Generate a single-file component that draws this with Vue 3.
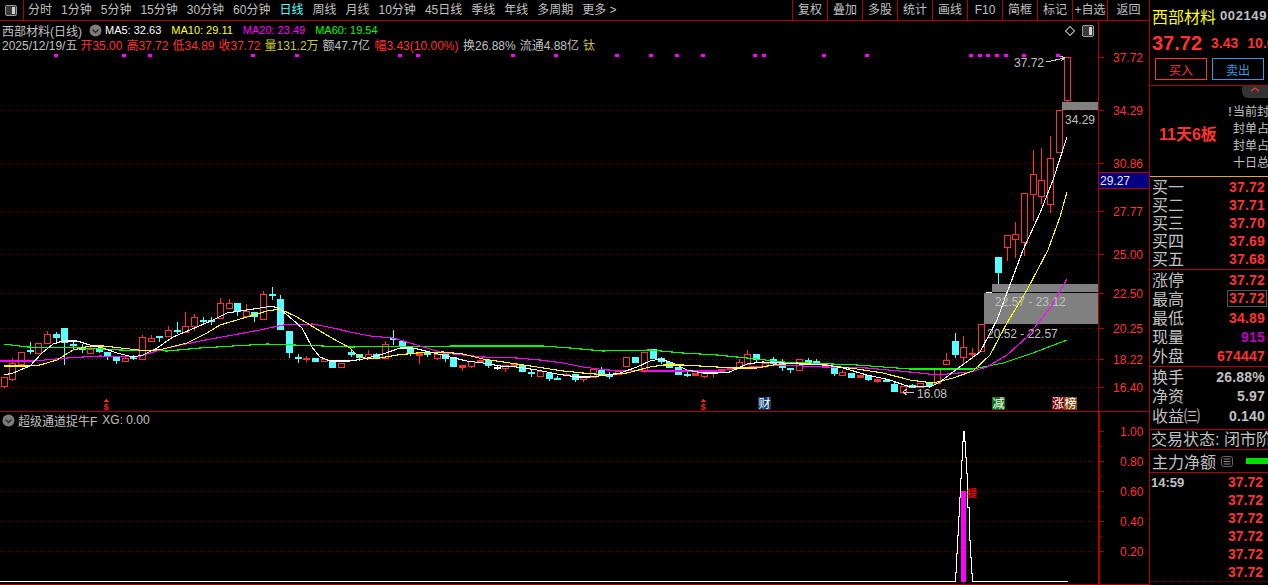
<script setup>
const leftTools = ['分时','1分钟','5分钟','15分钟','30分钟','60分钟','日线','周线','月线','10分钟','45日线','季线','年线','多周期','更多 >']
const rightTools = ['复权','叠加','多股','统计','画线','F10','简框','标记','+自选','返回']

function conv(ox, oy, list) {
  return list.map(([x, t, b, wt, wb, k]) => ({
    x: Math.round(ox + x / 3),
    t: Math.round(oy + t / 3),
    b: Math.round(oy + b / 3),
    wt: Math.round(oy + (wt ?? t) / 3),
    wb: Math.round(oy + (wb ?? b) / 3),
    k
  }))
}
const raw = [
  ...conv(0, 270, [
    [13,322,347,322,352,'r'],[37,280,326,265,330,'r'],[64,247,281,247,285,'r'],[91,240,240,216,248,'c'],
    [115,219,248,219,248,'r'],[142,192,218,183,218,'r'],[169,192,200,185,215,'c'],[193,174,216,174,282,'c'],
    [219,222,222,212,235,'c'],[247,233,233,222,245,'c'],[271,238,248,228,248,'r'],[298,237,242,232,245,'c'],
    [322,245,258,245,268,'c'],[349,261,270,261,278,'c'],[376,264,272,258,272,'r'],[400,260,260,254,266,'c'],
    [427,202,268,195,268,'r'],[454,203,213,195,213,'r'],[478,197,197,197,213,'c'],[505,181,197,168,197,'r'],
    [532,180,180,155,190,'c'],[556,169,187,127,187,'r'],[583,142,167,132,180,'r'],[610,150,150,142,160,'c'],
    [634,150,150,142,162,'c'],[661,100,143,85,143,'r'],[688,100,113,88,113,'r'],[712,99,124,99,135,'c'],
    [739,122,137,102,137,'r'],[763,126,138,126,152,'c'],[790,73,147,63,147,'r'],[817,71,71,52,87,'c'],
    [841,87,176,75,176,'c'],[868,183,245,183,260,'c'],[895,260,260,253,275,'c'],[919,264,264,258,272,'r'],
    [946,264,272,264,272,'c'],[973,268,274,268,274,'r'],[997,270,290,270,290,'c'],[1024,280,292,280,292,'r']
  ]),
  ...conv(350, 320, [
    [3,97,103,90,108,'c'],[27,103,110,103,120,'c'],[53,103,115,90,115,'r'],[78,103,110,100,113,'c'],
    [104,72,115,63,115,'r'],[130,55,55,30,72,'c'],[155,64,75,64,75,'c'],[181,85,100,78,104,'c'],
    [208,100,106,100,130,'f'],[232,100,100,95,108,'c'],[260,103,113,103,118,'r'],[286,103,113,103,122,'c'],
    [310,110,137,110,137,'c'],[337,136,140,136,150,'f'],[364,124,137,124,141,'r'],[389,120,126,120,126,'f'],
    [415,120,136,120,141,'c'],[441,141,141,135,147,'w'],[466,136,143,136,152,'r'],[493,130,135,130,141,'f'],
    [517,135,152,135,152,'c'],[544,155,155,150,167,'c'],[571,154,167,154,167,'r'],[596,160,173,160,179,'c'],
    [622,175,175,169,177,'c'],[649,162,166,158,166,'f'],[674,163,176,163,183,'c'],[700,172,178,172,182,'r'],
    [728,146,170,146,170,'r'],[752,150,162,140,162,'c'],[778,164,164,156,173,'c'],[805,154,162,154,162,'r'],
    [829,112,137,112,137,'r'],[856,111,126,111,126,'c'],[883,97,152,97,155,'r']
  ]),
  ...conv(650, 330, [
    [8,58,84,58,84,'c'],[34,85,92,80,100,'c'],[58,97,110,97,110,'c'],[85,112,132,112,132,'c'],
    [110,131,131,125,137,'c'],[136,129,134,129,134,'f'],[163,130,137,130,141,'r'],[190,125,130,125,140,'f'],
    [214,118,125,118,125,'f'],[241,112,118,112,118,'f'],[268,96,115,88,115,'r'],[292,72,102,60,102,'r'],
    [319,72,88,72,92,'c'],[346,100,107,100,112,'r'],[370,88,100,82,100,'c'],[397,98,110,88,120,'c'],
    [421,114,114,114,125,'c'],[448,88,119,88,119,'r'],[475,90,96,85,96,'c'],[499,94,102,88,102,'c'],
    [526,103,107,103,107,'f'],[553,113,128,113,135,'c'],[577,126,134,120,134,'r'],[604,128,140,128,140,'c'],
    [631,135,140,135,140,'f'],[655,136,147,136,150,'c'],[682,147,152,147,156,'f'],[709,149,149,146,152,'c'],
    [733,162,183,155,183,'c'],[760,168,185,168,190,'r'],[787,165,170,162,172,'c'],[811,158,172,158,172,'r'],
    [838,158,165,158,165,'c'],[862,115,160,115,160,'r']
  ]),
  ...conv(920, 240, [
    [78,361,371,338,371,'r'],[106,303,342,278,352,'c'],[130,322,350,288,368,'r'],[157,340,340,325,355,'r'],
    [184,253,332,253,332,'r'],[235,52,95,52,128,'c']
  ]),
  ...conv(920, 40, [
    [262,586,620,586,660,'r'],[286,583,598,546,650,'r'],[313,460,607,460,645,'r'],[340,403,461,330,540,'r'],
    [364,421,467,325,490,'r'],[391,355,491,288,515,'r'],[418,211,335,211,335,'r'],[442,52,179,52,183,'r']
  ])
]
const candles = raw.map((c) => {
  const color = c.k === 'c' ? '#55ffff' : c.k === 'w' ? '#ffffff' : '#ff3232'
  return { ...c, color, hollow: c.k === 'r' && c.b > c.t, cross: c.b === c.t }
})

const toPts = (arr) => arr.map((p) => p.join(',')).join(' ')
const white = toPts([[4,375],[13,373],[30,366],[42,353],[53,344],[63,341],[77,341],[90,345],[103,348],[117,353],[133,357],[143,355],[157,348],[173,337],[197,327],[213,320],[227,313],[240,311],[260,308],[272,306],[280,309],[293,320],[302,328],[312,347],[320,357],[330,361],[350,361],[363,359],[383,354],[400,348],[413,348],[430,352],[450,357],[467,361],[483,363],[500,366],[517,367],[537,370],[557,374],[577,377],[590,377],[607,375],[620,373],[637,367],[650,361],[660,359],[673,363],[687,370],[703,373],[717,373],[730,372],[747,364],[763,362],[783,363],[800,364],[827,365],[843,368],[867,375],[890,380],[907,386],[930,387],[940,382],[953,372],[980,352],[997,320],[1008,290],[1023,250],[1040,213],[1053,180],[1067,137]])
const yellow = toPts([[4,366],[27,366],[40,365],[57,360],[73,350],[90,346],[103,346],[130,349],[147,351],[163,349],[187,343],[207,333],[220,325],[247,317],[267,311],[280,309],[297,317],[310,325],[330,337],[350,348],[357,355],[367,359],[380,358],[397,355],[417,353],[443,352],[463,354],[483,359],[510,363],[537,367],[563,371],[583,373],[607,375],[627,373],[650,367],[663,365],[683,365],[717,367],[733,368],[757,368],[773,365],[797,363],[823,365],[857,369],[883,373],[910,380],[933,383],[953,378],[973,371],[990,355],[1007,323],[1027,290],[1048,250],[1060,217],[1067,192]])
const magenta = toPts([[0,361],[33,361],[67,358],[100,356],[137,357],[167,348],[200,341],[233,335],[260,330],[283,325],[313,324],[333,328],[350,332],[370,336],[393,338],[417,345],[443,353],[483,357],[517,358],[540,360],[563,363],[583,367],[607,370],[650,371],[717,371],[750,367],[783,365],[823,367],[867,368],[910,372],[937,375],[970,372],[987,367],[1007,355],[1027,337],[1050,308],[1067,279]])
const green = toPts([[4,344],[27,347],[83,348],[120,350],[167,351],[200,348],[267,344],[350,347],[457,346],[500,346],[543,346],[570,348],[603,351],[650,350],[683,353],[717,355],[747,358],[783,362],[857,365],[910,369],[973,369],[1003,363],[1033,353],[1067,340]])

const dots = [56,124,150,253,297,400,418,513,556,617,651,677,703,755,764,824,867,971,980,988,997,1006,1024,1058]
const upperGrid = [110,163,211,254,293,328,359,387]
const upperAxis = [[57,'37.72'],[110,'34.29'],[163,'30.86'],[211,'27.77'],[254,'25.00'],[293,'22.50'],[328,'20.25'],[359,'18.22'],[387,'16.40']]
const lowerAxis = [[431,'1.00'],[461,'0.80'],[491,'0.60'],[521,'0.40'],[551,'0.20']]
const lowerMinor = [446,476,506,536]
const lowerGrid = [461,491,521,551]
const peak = [[0,514],[106,514],[106,487],[109,487],[109,430],[112,430],[112,375],[115,375],[115,318],[118,318],[118,260],[121,260],[121,205],[124,205],[124,150],[127,150],[127,93],[130,93],[130,63],[132,63],[132,93],[135,93],[135,140],[138,140],[138,190],[140,190],[140,240],[142,240],[142,290],[146,290],[146,338],[148,338],[148,390],[151,390],[151,440],[154,440],[154,490],[157,490],[157,514],[440,514]]
const peakPts = '0,581.5 ' + toPts(peak.map(([x, y]) => [Math.round(920 + x / 3) + 0.5, Math.round(410 + y / 3) + 0.5]))

const buys = [['买一','37.72'],['买二','37.71'],['买三','37.70'],['买四','37.69'],['买五','37.68']]
const stats = [
  { l: '涨停', v: '37.72', c: 'red' },
  { l: '最高', v: '37.72', c: 'red', box: true },
  { l: '最低', v: '34.89', c: 'red' },
  { l: '现量', v: '915', c: 'purple' },
  { l: '外盘', v: '674447', c: 'red' }
]
const stats2 = [['换手','26.88%'],['净资','5.97'],['收益㈢','0.140']]
const ticks = ['14:59','','','','','']
</script>

<template>
  <div class="screen">
    <div class="left">
      <header class="toolbar">
        <div class="tool-icon">
          <svg width="12" height="11" viewBox="0 0 12 11">
            <rect x="0.5" y="0.5" width="11" height="10" rx="1.5" fill="#3a3a3a" stroke="#9a9a9a" />
            <rect x="7" y="2" width="3" height="7" fill="#d0d0d0" />
          </svg>
        </div>
        <nav class="periods">
          <span v-for="t in leftTools" :key="t" :class="{ active: t === '日线' }">{{ t }}</span>
        </nav>
        <nav class="actions">
          <span v-for="t in rightTools" :key="t" :class="{ last: t === '返回' }">{{ t }}</span>
        </nav>
      </header>

      <section class="upper">
        <div class="legend">
          <div class="legend-row">
            <span class="name">西部材料(日线)</span>
            <svg class="chev" width="13" height="13" viewBox="0 0 13 13">
              <circle cx="6.5" cy="6.5" r="6" fill="#7c7c7c" />
              <path d="M3.5 5.5 6.5 8.5 9.5 5.5" fill="none" stroke="#2a2a2a" stroke-width="1.4" />
            </svg>
            <span class="ma white">MA5: 32.63</span>
            <span class="ma yellow">MA10: 29.11</span>
            <span class="ma magenta">MA20: 23.49</span>
            <span class="ma green">MA60: 19.54</span>
          </div>
          <div class="legend-row quote">
            <span class="gray">2025/12/19/五</span>
            <span class="red first">开35.00</span>
            <span class="red">高37.72</span>
            <span class="red">低34.89</span>
            <span class="red">收37.72</span>
            <span class="olive">量131.2万</span>
            <span class="gray">额47.7亿</span>
            <span class="red nudge">幅3.43(10.00%)</span>
            <span class="gray nudge">换26.88%</span>
            <span class="gray">流通4.88亿</span>
            <span class="olive">钛</span>
          </div>
        </div>

        <svg class="chart" width="1149" height="390" viewBox="0 21 1149 390" shape-rendering="crispEdges">
          <line v-for="y in upperGrid" :key="'g' + y" x1="0" :y1="y + 0.5" x2="1098" :y2="y + 0.5" stroke="#8a0000" stroke-dasharray="1 3" />
          <rect x="1062" y="102" width="36" height="8" fill="#808080" />
          <rect x="992" y="284" width="106" height="8" fill="#808080" />
          <rect x="984" y="293" width="114" height="31" fill="#808080" />
          <line x1="986" y1="292.5" x2="992" y2="292.5" stroke="#fff" />

          <g v-for="(c, i) in candles" :key="'c' + i">
            <line :x1="c.x + 0.5" :y1="c.wt" :x2="c.x + 0.5" :y2="c.wb + 1" :stroke="c.color" />
            <line v-if="c.cross" :x1="c.x - 3" :y1="c.t + 0.5" :x2="c.x + 4" :y2="c.t + 0.5" :stroke="c.color" stroke-width="2" />
            <rect v-else-if="c.hollow" :x="c.x - 2.5" :y="c.t + 0.5" width="6" :height="c.b - c.t" fill="#000" :stroke="c.color" />
            <rect v-else :x="c.x - 3" :y="c.t" width="7" :height="c.b - c.t + 1" :fill="c.color" />
          </g>

          <polyline :points="green" class="ma-line" stroke="#00ff00" />
          <polyline :points="magenta" class="ma-line" stroke="#ff00ff" />
          <polyline :points="yellow" class="ma-line" stroke="#ffff00" />
          <polyline :points="white" class="ma-line" stroke="#ffffff" />

          <rect v-for="x in dots" :key="'d' + x" :x="x - 2" y="54" width="4" height="3" fill="#ff00ff" />

          <path d="M1070 26.5 1074.5 31 1070 35.5 1065.5 31Z" fill="none" stroke="#8c8c8c" />
          <rect x="1082.5" y="25.5" width="11" height="11" rx="2" fill="#3a3a3a" stroke="#9a9a9a" />
          <rect x="1089" y="27" width="3" height="8" fill="#d0d0d0" />

          <text x="1014" y="67" class="label">37.72</text>
          <path d="M1046 62 1065 58M1060 56 1065 58 1061 61" fill="none" stroke="#c8c8c8" />
          <text x="1065" y="124" class="label">34.29</text>
          <text x="917" y="398" class="label">16.08</text>
          <path d="M914 392H903M907 389 903 392 907 395" fill="none" stroke="#c8c8c8" />
          <text x="995" y="306" class="label">22.57 - 23.12</text>
          <text x="987" y="338" class="label">20.52 - 22.57</text>

          <polygon points="106,399 103,402 109,402" fill="#ff2020" />
          <text x="106" y="409.5" class="sign">$</text>
          <polygon points="703,399 700,402 706,402" fill="#ff2020" />
          <text x="703" y="409.5" class="sign">$</text>

          <rect x="758" y="397" width="13" height="13" fill="#0c3c6c" />
          <text x="764.5" y="408" class="chip">财</text>
          <rect x="992" y="397" width="13" height="13" fill="#107010" />
          <text x="998.5" y="408" class="chip">减</text>
          <rect x="1052" y="397" width="12" height="13" fill="#800000" />
          <text x="1058" y="408" class="chip">涨</text>
          <rect x="1064" y="397" width="13" height="13" fill="#804c10" />
          <text x="1070.5" y="408" class="chip">榜</text>

          <line x1="1098.5" y1="21" x2="1098.5" y2="411" stroke="#b00000" />
          <g v-for="[y, t] in upperAxis" :key="'a' + y">
            <line x1="1099" :y1="y + 0.5" x2="1104" :y2="y + 0.5" stroke="#b00000" />
            <text x="1113" :y="y + 5" class="axis">{{ t }}</text>
          </g>
          <rect x="1099" y="172" width="50" height="16" fill="#000080" />
          <line x1="1099" y1="172.5" x2="1149" y2="172.5" stroke="#b00000" />
          <line x1="1099" y1="188.5" x2="1149" y2="188.5" stroke="#b00000" />
          <text x="1100" y="185" class="axis-current">29.27</text>
        </svg>
      </section>

      <section class="lower">
        <div class="legend lower-legend">
          <svg class="chev-low" width="13" height="13" viewBox="0 0 13 13">
            <circle cx="6.5" cy="6.5" r="6" fill="#7c7c7c" />
            <path d="M3.5 5.5 6.5 8.5 9.5 5.5" fill="none" stroke="#2a2a2a" stroke-width="1.4" />
          </svg>
          <span class="gray">超级通道捉牛F</span>
          <span class="gray xg">XG: 0.00</span>
        </div>
        <svg class="chart" width="1149" height="172" viewBox="0 412 1149 172" shape-rendering="crispEdges">
          <line v-for="y in lowerGrid" :key="'lg' + y" x1="0" :y1="y + 0.5" x2="1095" :y2="y + 0.5" stroke="#8a0000" stroke-dasharray="1 3" />
          <rect x="961" y="491" width="5" height="91" fill="#ff00ff" />
          <polyline :points="peakPts" fill="none" stroke="#fff" />
          <text x="967" y="497" class="mark">提</text>
          <rect x="1098" y="412" width="2" height="172" fill="#b00000" />
          <g v-for="[y, t] in lowerAxis" :key="'la' + y">
            <line x1="1100" :y1="y + 0.5" x2="1104" :y2="y + 0.5" stroke="#b00000" />
            <text x="1120" :y="y + 5" class="axis">{{ t }}</text>
          </g>
          <line v-for="y in lowerMinor" :key="'lm' + y" x1="1100" :y1="y + 0.5" x2="1102" :y2="y + 0.5" stroke="#b00000" />
        </svg>
      </section>
    </div>

    <aside class="side">
      <div class="head">
        <div class="title"><span class="stock">西部材料</span><span class="code">002149</span></div>
        <div class="price"><b>37.72</b><span class="chg">3.43</span><span class="pct">10.00%</span></div>
        <div class="trade">
          <button class="buy">买入</button>
          <button class="sell">卖出</button>
        </div>
      </div>

      <div class="info">
        <div class="collapse">
          <svg width="10" height="7" viewBox="0 0 10 7"><path d="M1 5 5 2 9 5" fill="none" stroke="#ff3232" stroke-width="1.4" /></svg>
        </div>
        <div class="board">11天6板</div>
        <ul class="notes">
          <li><i>!</i>当前封</li>
          <li>封单占</li>
          <li>封单占</li>
          <li>十日总</li>
        </ul>
      </div>

      <div class="block buys">
        <div v-for="[l, v] in buys" :key="l" class="row r18"><span>{{ l }}</span><b class="red">{{ v }}</b></div>
      </div>

      <div class="block stats">
        <div v-for="s in stats" :key="s.l" class="row r19">
          <span>{{ s.l }}</span><b :class="[s.c, { boxed: s.box }]">{{ s.v }}</b>
        </div>
      </div>

      <div class="block stats2">
        <div v-for="[l, v] in stats2" :key="l" class="row r19"><span>{{ l }}</span><b class="dim">{{ v }}</b></div>
      </div>

      <div class="block status">交易状态: 闭市阶段</div>

      <div class="block flow">
        <span>主力净额</span>
        <svg width="12" height="11" viewBox="0 0 12 11">
          <rect x="0.5" y="0.5" width="11" height="10" rx="2" fill="none" stroke="#666" />
          <path d="M2.5 3H9.5M2.5 5.5H9.5M2.5 8H9.5" stroke="#888" />
        </svg>
        <i class="flow-bar"></i>
      </div>

      <div class="ticks">
        <div v-for="(t, i) in ticks" :key="i" class="tick"><b class="time">{{ t }}</b><b class="red">37.72</b></div>
      </div>
    </aside>
  </div>
</template>

<style>
html, body { margin: 0; background: #000; }
</style>

<style scoped>
.screen {
  display: flex;
  width: 1268px;
  height: 585px;
  overflow: hidden;
  background: #000;
  color: #c0c0c0;
  font-family: "Liberation Sans", "Noto Sans CJK SC", sans-serif;
  font-size: 12px;
}
.left {
  box-sizing: border-box;
  width: 1150px;
  flex: none;
  display: flex;
  flex-direction: column;
  border-right: 1px solid #b00000;
}
.toolbar {
  box-sizing: border-box;
  display: flex;
  height: 21px;
  flex: none;
  border-bottom: 1px solid #b00000;
  line-height: 20px;
  white-space: nowrap;
}
.tool-icon {
  box-sizing: border-box;
  width: 24px;
  display: flex;
  align-items: center;
  padding-left: 5px;
  border-right: 1px solid #b00000;
}
.periods {
  display: flex;
  gap: 9px;
  padding-left: 4px;
}
.periods .active { color: #55ffff; }
.actions { display: flex; margin-left: auto; }
.actions span {
  box-sizing: border-box;
  width: 35px;
  text-align: center;
  border-left: 1px solid #b00000;
}
.actions .last { width: 42px; }

.upper, .lower { position: relative; flex: none; }
.upper { height: 391px; border-bottom: 1px solid #b00000; box-sizing: border-box; }
.lower { height: 173px; border-bottom: 1px solid #b00000; box-sizing: border-box; }
.chart { display: block; }
.legend {
  position: absolute;
  left: 2px;
  top: 2px;
  z-index: 1;
}
.legend-row {
  display: flex;
  align-items: center;
  height: 14px;
  white-space: nowrap;
}
.chev { margin: 0 3px 0 7px; }
.ma { font-size: 11px; margin-right: 10px; }
.white { color: #fff; }
.yellow { color: #ff0; }
.magenta { color: #f0f; }
.green { color: #0f0; }
.gray { color: #c0c0c0; }
.red { color: #ff3232; }
.olive { color: #c8c832; }
.purple { color: #c000c0; }
.quote { gap: 4px; }
.quote .first { margin-left: -1px; }
.quote .nudge { margin-left: 0.5px; }

.lower-legend {
  display: flex;
  align-items: center;
  left: 2px;
  top: 1px;
  height: 14px;
  white-space: nowrap;
}
.chev-low { margin-right: 3px; }
.xg { margin-left: 5px; }

.ma-line { fill: none; stroke-width: 1.1; }
.label { fill: #c0c0c0; font-size: 12px; }
.axis { fill: #ff3232; font-size: 12px; }
.axis-current { fill: #e8e8e8; font-size: 12px; }
.sign { fill: #ff2020; font-size: 9px; font-weight: 700; text-anchor: middle; }
.chip { fill: #fff; font-size: 12px; text-anchor: middle; }
.mark { fill: #ff0000; font-size: 10px; font-weight: 700; }

.side {
  flex: 1;
  min-width: 0;
  display: flex;
  flex-direction: column;
  overflow: hidden;
}
.head {
  box-sizing: border-box;
  height: 86px;
  flex: none;
  border-bottom: 1px solid #b00000;
  white-space: nowrap;
}
.title {
  display: flex;
  align-items: center;
  height: 31px;
  padding-left: 2px;
}
.stock { color: #ff0; font-size: 16px; }
.code { margin-left: 4px; font-size: 13px; font-weight: 700; letter-spacing: 0.6px; color: #c0c0c0; }
.price {
  display: flex;
  align-items: center;
  height: 24px;
  padding-left: 2px;
  color: #ff3232;
  font-weight: 700;
}
.price b { font-size: 20px; }
.chg { margin-left: 9px; font-size: 14px; }
.pct { margin-left: 9px; font-size: 14px; }
.trade {
  display: flex;
  gap: 5px;
  margin-top: 3px;
  padding-left: 5px;
}
.trade button {
  box-sizing: border-box;
  width: 52px;
  height: 22px;
  padding: 0;
  background: #000;
  font: inherit;
  font-size: 12px;
  border: 1px solid;
}
.buy { color: #ff3232; border-color: #ff3232; }
.sell { color: #3c96dc; border-color: #3c96dc; }

.info {
  position: relative;
  box-sizing: border-box;
  height: 91px;
  flex: none;
  display: flex;
  border-bottom: 1px solid #e8a040;
  white-space: nowrap;
}
.collapse {
  position: absolute;
  right: 0;
  top: 0;
  width: 26px;
  height: 12px;
  background: #333;
  border-bottom-left-radius: 6px;
  display: flex;
  justify-content: center;
}
.board {
  width: 83px;
  flex: none;
  padding-top: 39px;
  padding-left: 9px;
  box-sizing: border-box;
  color: #ff3232;
  font-size: 16px;
  font-weight: 700;
  line-height: 20px;
}
.notes {
  list-style: none;
  margin: 0;
  padding: 18px 0 0;
  line-height: 17px;
  font-size: 12px;
}
.notes li { position: relative; }
.notes i {
  position: absolute;
  left: -5px;
  font-style: normal;
  font-weight: 700;
  color: #999;
}

.block {
  box-sizing: border-box;
  flex: none;
  border-bottom: 1px solid #b00000;
}
.buys { height: 93px; padding-top: 1px; }
.stats { height: 97px; }
.stats2 { height: 63px; }
.row {
  display: flex;
  justify-content: space-between;
  align-items: center;
  padding: 0 3px 0 2px;
  font-size: 16px;
}
.row > span { margin-bottom: 2px; white-space: nowrap; }
.r18 { height: 18px; }
.r19 { height: 19.5px; }
.stats .r19 { height: 19px; }
.row b { font-size: 14px; font-weight: 700; letter-spacing: 0.2px; }
.row .dim { color: #c0c0c0; }
.boxed {
  box-sizing: border-box;
  height: 17px;
  line-height: 15px;
  margin-right: -2px;
  padding: 0 1px;
  border: 1px solid #555;
}
.status {
  height: 20px;
  font-size: 16px;
  line-height: 19px;
  white-space: nowrap;
  padding-left: 1px;
}
.flow {
  height: 23px;
  display: flex;
  align-items: center;
  font-size: 16px;
  padding-left: 2px;
  white-space: nowrap;
}
.flow svg { margin-left: 5px; flex: none; }
.flow-bar {
  display: block;
  flex: none;
  width: 24px;
  height: 6px;
  margin-left: 13px;
  background: #00e000;
}
.ticks { height: 108px; border-bottom: 1px dotted #8a0000; flex: none; }
.tick {
  display: flex;
  justify-content: space-between;
  align-items: center;
  height: 18px;
  padding: 0 5px 0 1px;
  font-size: 14px;
}
.time { color: #c0c0c0; font-size: 13px; }
</style>
